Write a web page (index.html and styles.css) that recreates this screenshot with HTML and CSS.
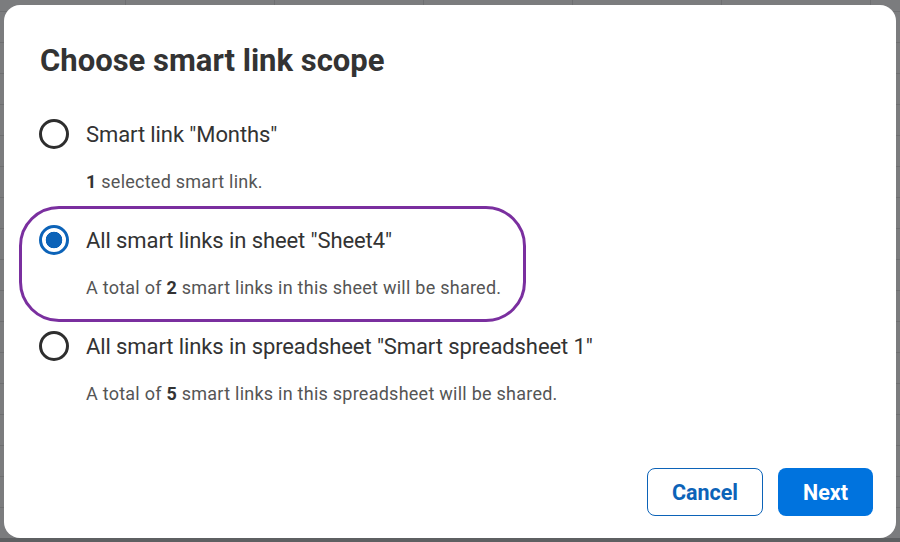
FILE: index.html
```html
<!DOCTYPE html>
<html>
<head lang="en">
    <meta charset="UTF-8">
    <title>Choose smart link scope</title>
    <link rel="stylesheet" href="styles.css">
</head>
<body>
<div class="backdrop">
    <div class="dialog">
        <h1 class="title">Choose smart link scope</h1>

        <div class="options">
            <div class="option">
                <div class="option-row">
                    <span class="radio"></span>
                    <span class="label">Smart link "Months"</span>
                </div>
                <p class="desc"><b>1</b> selected smart link.</p>
            </div>
            <div class="option selected">
                <div class="option-row">
                    <span class="radio checked"></span>
                    <span class="label">All smart links in sheet "Sheet4"</span>
                </div>
                <p class="desc">A total of <b>2</b> smart links in this sheet will be shared.</p>
            </div>
            <div class="option">
                <div class="option-row">
                    <span class="radio"></span>
                    <span class="label">All smart links in spreadsheet "Smart spreadsheet 1"</span>
                </div>
                <p class="desc">A total of <b>5</b> smart links in this spreadsheet will be shared.</p>
            </div>
        </div>

        <div class="actions">
            <button class="btn btn-secondary">Cancel</button>
            <button class="btn btn-primary">Next</button>
        </div>
    </div>
</div>
</body>
</html>
```

FILE: styles.css
```css
* {
    margin: 0;
    padding: 0;
    box-sizing: border-box;
    font-family: Roboto, "Liberation Sans", sans-serif;
}

body {
    width: 900px;
    height: 542px;
    overflow: hidden;
    background: #5e6062;
}

.backdrop {
    height: 538px;
    padding: 5px 4px 0 4px;
    background-color: #7b7c7e;
    background-image:
        repeating-linear-gradient(90deg, transparent 0, transparent 125px, #6e6f71 125px, #6e6f71 126px, transparent 126px, transparent 149px),
        repeating-linear-gradient(0deg, transparent 0, transparent 30px, #6e6f71 30px, #6e6f71 31px);
}

.dialog {
    height: 533px;
    background: #fff;
    border-radius: 16px;
    padding: 0 23px 22px 15px;
    display: flex;
    flex-direction: column;
}

.title {
    margin: 36px 0 0 21px;
    font-size: 31px;
    line-height: 40px;
    font-weight: 700;
    color: #333;
}

.options {
    margin-top: 19px;
    display: flex;
    flex-direction: column;
    align-items: flex-start;
}

.option {
    padding: 16px 22px 21px 17px;
    border: 3px solid transparent;
    border-radius: 40px;
}

.option + .option {
    margin-top: -10px;
}

.option.selected {
    border-color: #7a2f9f;
}

.option-row {
    display: flex;
    align-items: center;
    height: 30px;
    gap: 17px;
}

.radio {
    width: 30px;
    height: 30px;
    border: 3px solid #2e2e2e;
    border-radius: 50%;
    flex: none;
}

.radio.checked {
    border-color: #0c63b8;
    background: radial-gradient(circle, #0c63b8 0, #0c63b8 8px, #fff 8.6px);
}

.label {
    font-size: 22px;
    letter-spacing: -0.1px;
    color: #333;
}

.desc {
    margin: 23px 0 0 47px;
    font-size: 18px;
    line-height: 20px;
    letter-spacing: 0.25px;
    color: #555;
}

.desc b {
    color: #333;
}

.actions {
    margin-top: auto;
    display: flex;
    justify-content: flex-end;
    gap: 15px;
}

.btn {
    height: 48px;
    border-radius: 8px;
    font-size: 21.5px;
    font-weight: 700;
    cursor: pointer;
}

.btn-secondary {
    width: 116px;
    background: #fff;
    border: 1.5px solid #0c63b8;
    color: #0c63b8;
}

.btn-primary {
    width: 95px;
    background: #0073de;
    border: none;
    color: #fff;
}
```
